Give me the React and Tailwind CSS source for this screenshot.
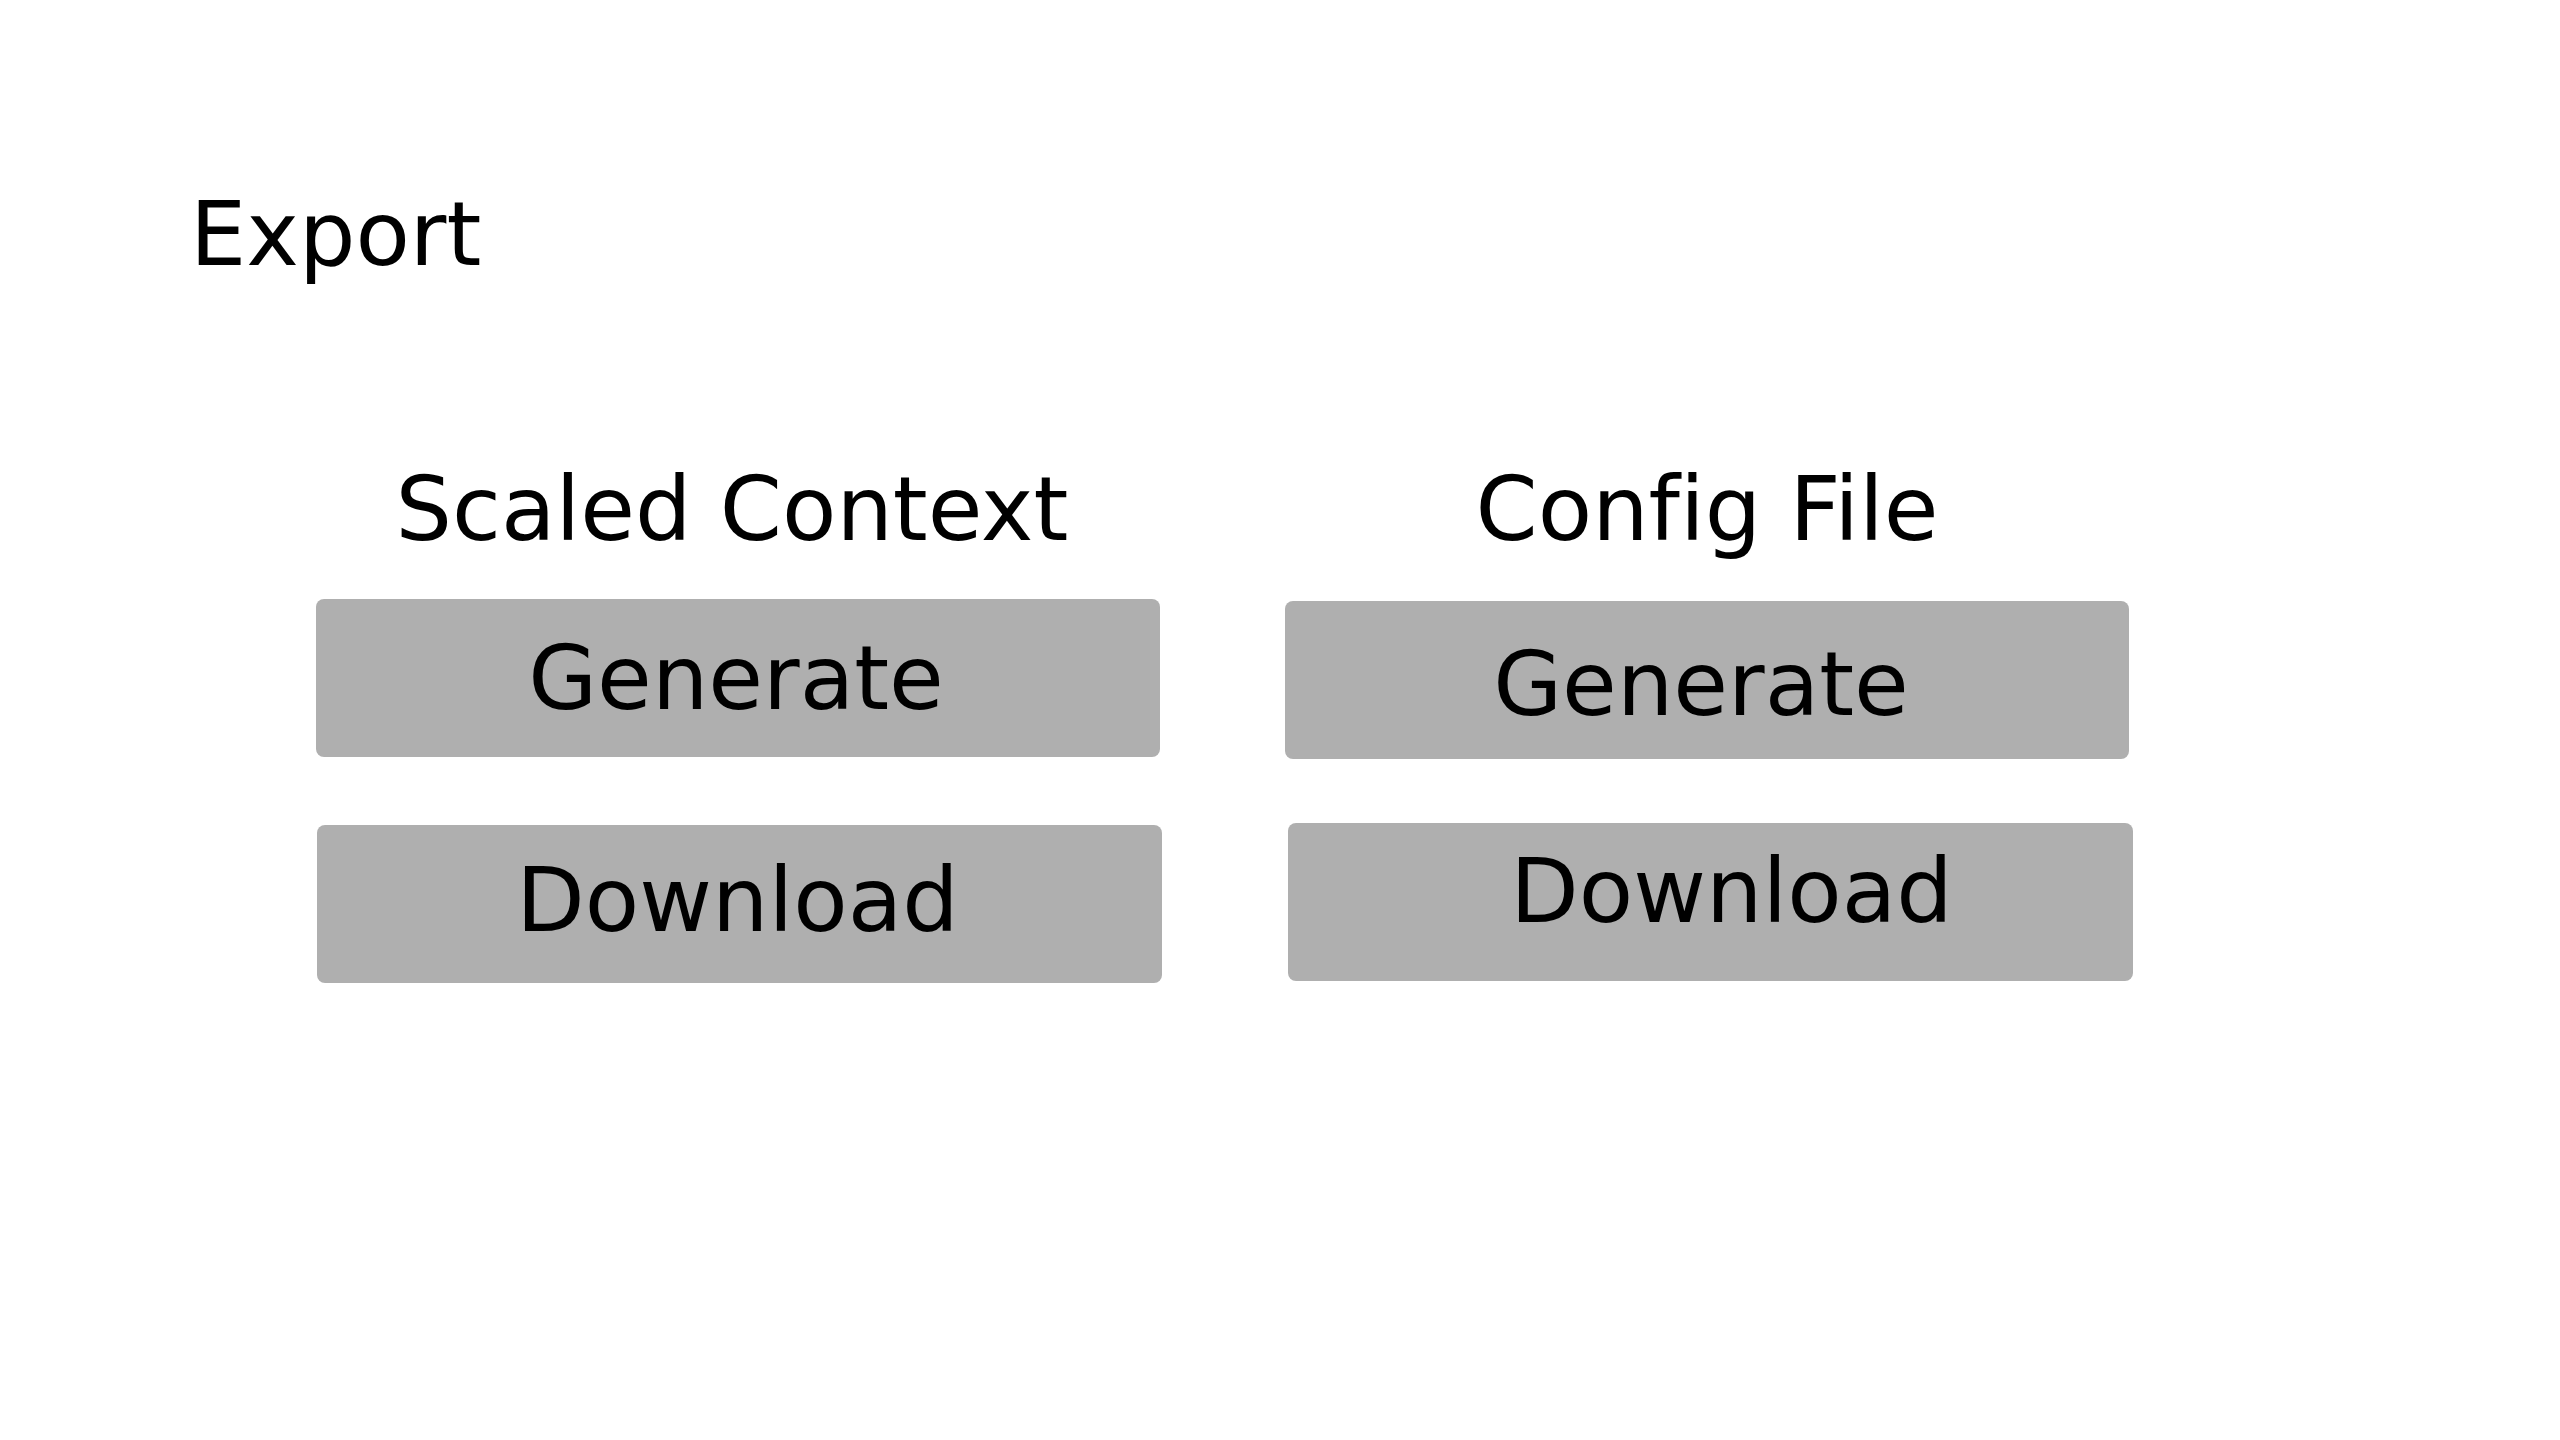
export default function App() {
  const font = { fontFamily: '"DejaVu Sans", "Noto Sans", sans-serif' };
  return (
    <div className="w-full h-[1440px] bg-white text-black overflow-hidden [font-variant-ligatures:none]" style={font}>
      <div className="pt-[190px] pl-[190px]">
        <h1 className="text-[89px] leading-none font-normal">Export</h1>
      </div>
      <div className="mt-[186px] ml-[316px] flex gap-[123px]">
        <div className="flex flex-col w-[846px]">
          <h2 className="text-[89px] leading-none font-normal text-center w-[844px] pr-[12px]">Scaled Context</h2>
          <button className="mt-[45px] w-[844px] h-[158px] rounded-lg bg-[#afafaf] text-[89px] leading-none flex items-center justify-center pr-[4px]">
            Generate
          </button>
          <button className="mt-[68px] ml-[1px] w-[845px] h-[158px] rounded-lg bg-[#afafaf] text-[89px] leading-none flex items-center justify-center pr-[4px] pb-[8px]">
            Download
          </button>
        </div>
        <div className="flex flex-col w-[848px]">
          <h2 className="text-[89px] leading-none font-normal text-center w-[844px]">Config File</h2>
          <button className="mt-[47px] w-[844px] h-[158px] rounded-lg bg-[#afafaf] text-[89px] leading-none flex items-center justify-center pr-[12px] pt-[8px]">
            Generate
          </button>
          <button className="mt-[64px] ml-[3px] w-[845px] h-[158px] rounded-lg bg-[#afafaf] text-[89px] leading-none flex items-center justify-center pl-[42px] pb-[22px]">
            Download
          </button>
        </div>
      </div>
    </div>
  );
}
